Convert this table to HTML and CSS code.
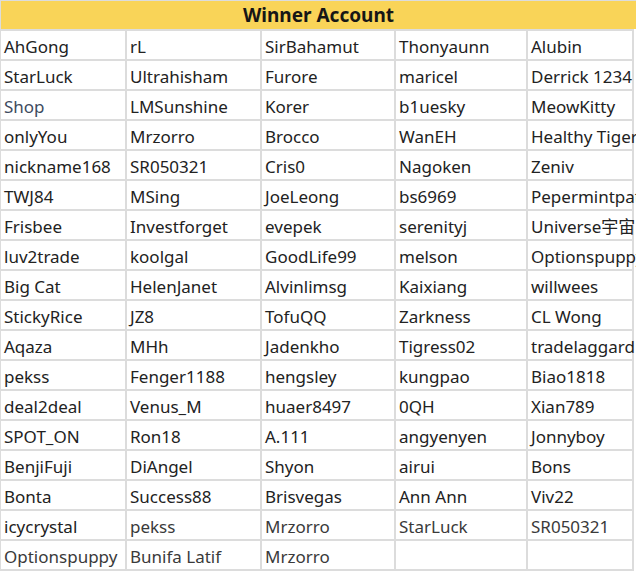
FILE: index.html
```html
<!DOCTYPE html>
<html lang="en">
<head>
<meta charset="utf-8">
<title>Winner Account</title>
<link rel="stylesheet" href="styles.css">
</head>
<body>
<div class="sheet">
  <div class="title">Winner Account</div>
  <div class="grid">
    <div class="cell">AhGong</div><div class="cell">rL</div><div class="cell">SirBahamut</div><div class="cell">Thonyaunn</div><div class="cell">Alubin</div>
    <div class="cell">StarLuck</div><div class="cell">Ultrahisham</div><div class="cell">Furore</div><div class="cell">maricel</div><div class="cell">Derrick 1234</div>
    <div class="cell soft">Shop</div><div class="cell">LMSunshine</div><div class="cell">Korer</div><div class="cell">b1uesky</div><div class="cell">MeowKitty</div>
    <div class="cell">onlyYou</div><div class="cell">Mrzorro</div><div class="cell">Brocco</div><div class="cell">WanEH</div><div class="cell">Healthy Tiger</div>
    <div class="cell">nickname168</div><div class="cell">SR050321</div><div class="cell">Cris0</div><div class="cell">Nagoken</div><div class="cell">Zeniv</div>
    <div class="cell">TWJ84</div><div class="cell">MSing</div><div class="cell">JoeLeong</div><div class="cell">bs6969</div><div class="cell">Pepermintpatty</div>
    <div class="cell">Frisbee</div><div class="cell">Investforget</div><div class="cell">evepek</div><div class="cell">serenityj</div><div class="cell">Universe宇宙</div>
    <div class="cell">luv2trade</div><div class="cell">koolgal</div><div class="cell">GoodLife99</div><div class="cell">melson</div><div class="cell">Optionspuppy</div>
    <div class="cell">Big Cat</div><div class="cell">HelenJanet</div><div class="cell">Alvinlimsg</div><div class="cell">Kaixiang</div><div class="cell">willwees</div>
    <div class="cell">StickyRice</div><div class="cell">JZ8</div><div class="cell">TofuQQ</div><div class="cell">Zarkness</div><div class="cell">CL Wong</div>
    <div class="cell">Aqaza</div><div class="cell">MHh</div><div class="cell">Jadenkho</div><div class="cell">Tigress02</div><div class="cell">tradelaggard</div>
    <div class="cell">pekss</div><div class="cell">Fenger1188</div><div class="cell">hengsley</div><div class="cell">kungpao</div><div class="cell">Biao1818</div>
    <div class="cell">deal2deal</div><div class="cell">Venus_M</div><div class="cell">huaer8497</div><div class="cell">0QH</div><div class="cell">Xian789</div>
    <div class="cell">SPOT_ON</div><div class="cell">Ron18</div><div class="cell">A.111</div><div class="cell">angyenyen</div><div class="cell">Jonnyboy</div>
    <div class="cell">BenjiFuji</div><div class="cell">DiAngel</div><div class="cell">Shyon</div><div class="cell">airui</div><div class="cell">Bons</div>
    <div class="cell">Bonta</div><div class="cell">Success88</div><div class="cell">Brisvegas</div><div class="cell">Ann Ann</div><div class="cell">Viv22</div>
    <div class="cell">icycrystal</div><div class="cell gray">pekss</div><div class="cell gray">Mrzorro</div><div class="cell gray">StarLuck</div><div class="cell gray">SR050321</div>
    <div class="cell gray">Optionspuppy</div><div class="cell gray">Bunifa Latif</div><div class="cell gray">Mrzorro</div><div class="cell"></div><div class="cell"></div>
  </div>
</div>
</body>
</html>
```
FILE: styles.css
```css
html, body {
  margin: 0;
  padding: 0;
  background: #ffffff;
  overflow: hidden;
}

.sheet {
  width: 635px;
  border-top: 1px solid #dcdcdc;
  border-left: 1px solid #dcdcdc;
  font-family: "Noto Sans", "Noto Sans CJK SC", sans-serif;
  color: #222222;
}

.title {
  height: 28px;
  background: #f9d458;
  text-align: center;
  font-weight: bold;
  font-size: 19px;
  line-height: 28px;
  color: #161616;
}

.grid {
  display: grid;
  grid-template-columns: 124px 133px 132px 130px 104px;
  grid-auto-rows: 28px;
  gap: 2px;
  padding: 2px 2px 2px 0;
  width: fit-content;
  background: #dcdcdc;
}

.cell {
  background: #ffffff;
  box-sizing: border-box;
  padding: 6px 0 0 3px;
  font-size: 17px;
  line-height: 20px;
  white-space: nowrap;
}

.soft {
  color: #3e4b5e;
}

.gray {
  color: #3a3a3a;
}
```
